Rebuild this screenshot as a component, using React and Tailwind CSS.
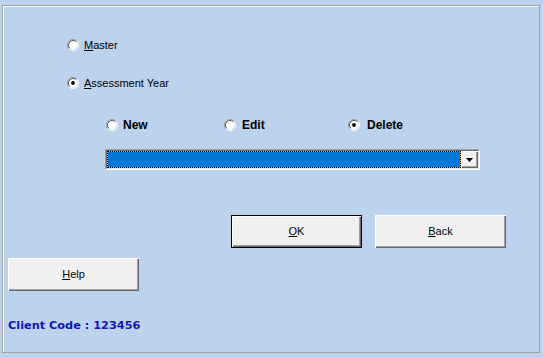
import React from 'react';

const font = { fontFamily: '"Liberation Sans", Arial, sans-serif' };

function Radio({ checked }) {
    return (
        <svg width="12" height="12" viewBox="0 0 12 12" className="shrink-0">
            <circle cx="6" cy="6" r="5" fill="#fff" />
            <path d="M2.11 9.89 A5.5 5.5 0 0 1 9.89 2.11" stroke="#9a9a9a" fill="none" />
            <path d="M9.89 2.11 A5.5 5.5 0 0 1 2.11 9.89" stroke="#ffffff" fill="none" />
            <path d="M2.82 9.18 A4.5 4.5 0 0 1 9.18 2.82" stroke="#5a5a5a" fill="none" />
            <path d="M9.18 2.82 A4.5 4.5 0 0 1 2.82 9.18" stroke="#e3e3e3" fill="none" />
            {checked && <circle cx="6" cy="6" r="1.9" fill="#000" />}
        </svg>
    );
}

function WinButton({ label, hot, isDefault }) {
    const rest = label.slice(1);
    return (
        <div
            className={`w-[131px] h-[33px] bg-[#f0f0f0] flex items-center justify-center text-[11px] text-black ${
                isDefault
                    ? 'border border-black shadow-[inset_1px_1px_#fff,inset_-1px_-1px_#696969,inset_-2px_-2px_#a0a0a0]'
                    : 'shadow-[inset_1px_1px_#fff,inset_-1px_-1px_#696969,inset_-2px_-2px_#a0a0a0]'
            }`}
        >
            <span>
                <span className="underline">{hot}</span>
                {rest}
            </span>
        </div>
    );
}

export default function App() {
    return (
        <div className="w-[543px] h-[357px] bg-[#bdd2ec] pt-[5px] pl-[2px]" style={font}>
            <div className="w-[538px] h-[348px] border border-[#a0a0a0]">
                <div className="h-full border-t border-l border-white flex flex-col">
                    {/* Master */}
                    <div className="mt-[30px] h-4 pl-[63px] flex items-center text-[11px] text-black">
                        <Radio />
                        <span className="ml-[5px]"><span className="underline">M</span>aster</span>
                    </div>

                    {/* Assessment Year */}
                    <div className="mt-[22px] h-4 pl-[63px] flex items-center text-[11px] text-black">
                        <Radio checked />
                        <span className="ml-[5px]"><span className="underline">A</span>ssessment Year</span>
                    </div>

                    {/* New / Edit / Delete */}
                    <div className="mt-[26px] h-4 pl-[102px] flex items-center text-[12px] font-bold text-black">
                        <div className="w-[118px] flex items-center">
                            <Radio />
                            <span className="ml-[5px]">New</span>
                        </div>
                        <div className="w-[124px] flex items-center">
                            <Radio />
                            <span className="ml-[6px]">Edit</span>
                        </div>
                        <div className="flex items-center">
                            <Radio checked />
                            <span className="ml-[7px]">Delete</span>
                        </div>
                    </div>

                    {/* combo */}
                    <div className="mt-[16px] ml-[101px] w-[375px] h-[21px] border-t border-l border-[#a0a0a0] border-b border-r border-b-white border-r-white">
                        <div className="h-full border-t border-l border-[#696969] border-b border-r border-b-[#e3e3e3] border-r-[#e3e3e3] flex bg-white">
                            <div className="flex-1 bg-[#e8a050]">
                                <div className="h-full border border-dotted border-black bg-[#0078d7] bg-clip-padding" />
                            </div>
                            <div className="w-[17px] h-full bg-[#f0f0f0] shadow-[inset_1px_1px_#fff,inset_-1px_-1px_#696969,inset_-2px_-2px_#a0a0a0] flex items-center justify-center">
                                <svg width="7" height="4" viewBox="0 0 7 4">
                                    <path d="M0 0 H7 L3.5 4 Z" fill="#000" />
                                </svg>
                            </div>
                        </div>
                    </div>

                    {/* OK / Back */}
                    <div className="mt-[45px] ml-[227px] flex gap-[13px]">
                        <WinButton label="OK" hot="O" isDefault />
                        <WinButton label="Back" hot="B" />
                    </div>

                    {/* Help */}
                    <div className="mt-[10px] ml-[4px]">
                        <WinButton label="Help" hot="H" />
                    </div>

                    {/* client code */}
                    <div
                        className="mt-[28px] ml-[4px] text-[11.3px] leading-[14px] font-bold text-[#1414b8]"
                        style={{ fontFamily: '"DejaVu Sans", Verdana, sans-serif' }}
                    >
                        Client Code : 123456
                    </div>
                </div>
            </div>
        </div>
    );
}
